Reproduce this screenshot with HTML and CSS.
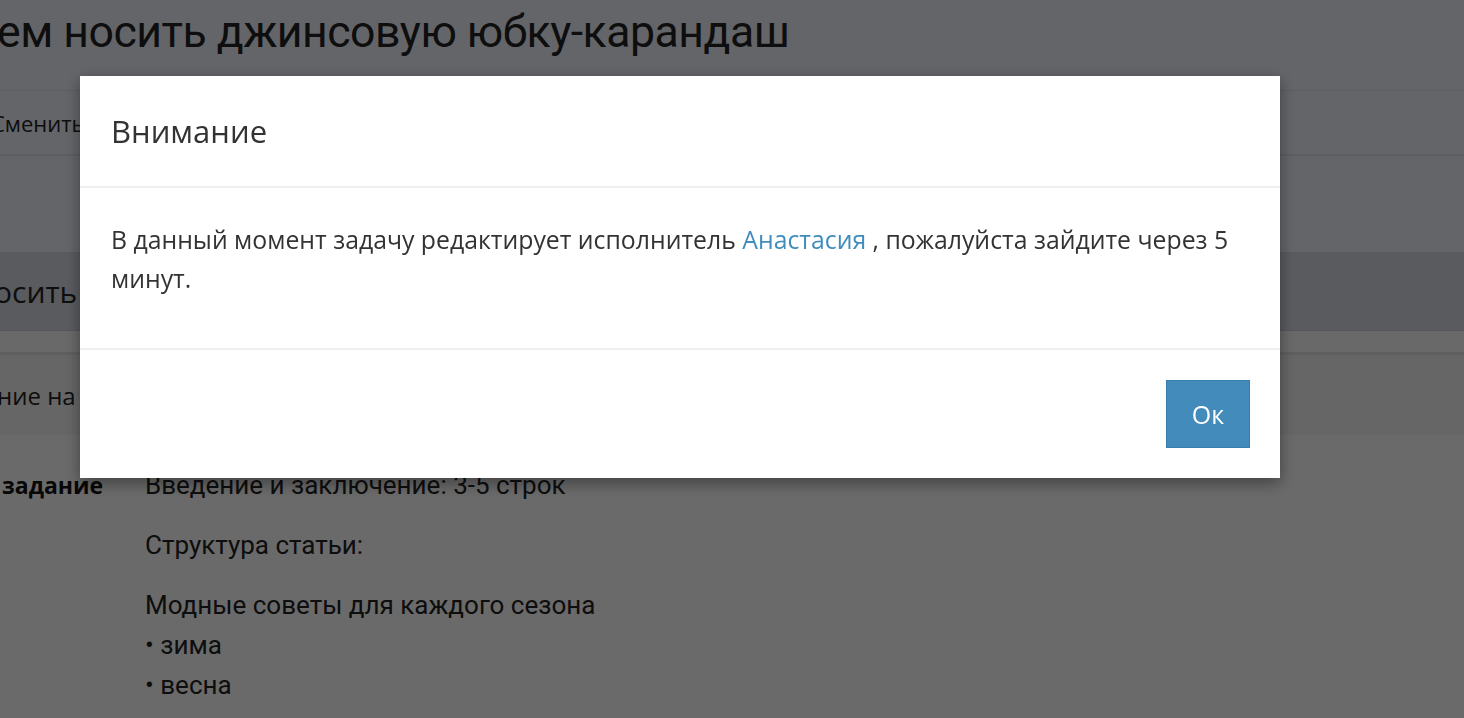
FILE: index.html
```html
<!DOCTYPE html>
<html lang="ru">
  <head>
    <meta charset="UTF-8" />
    <meta name="viewport" content="width=device-width, initial-scale=1.0" />
    <title>Задача</title>
    <link rel="stylesheet" href="styles.css">
  </head>

  <body>
    <div class="page">
      <h1 class="task-title">ем носить джинсовую юбку-карандаш</h1>

      <div class="tabs">
        <div class="tab">Сменить</div>
      </div>

      <div class="panel-head">осить</div>
      <div class="panel-gap"></div>
      <div class="panel-row">ние на</div>

      <div class="task-info">
        <div class="info-label">задание</div>
        <div class="info-value">
          <p>Введение и заключение: 3-5 строк</p>
          <p>Структура статьи:</p>
          <p class="list-head">Модные советы для каждого сезона</p>
          <p class="list-item">• зима</p>
          <p class="list-item">• весна</p>
        </div>
      </div>
    </div>

    <div class="overlay">
      <div class="modal">
        <div class="modal-header">
          <h4 class="modal-title">Внимание</h4>
        </div>
        <div class="modal-body">
          В данный момент задачу редактирует исполнитель <a href="#">Анастасия</a> , пожалуйста зайдите через 5 минут.
        </div>
        <div class="modal-footer">
          <button class="btn-ok">Ок</button>
        </div>
      </div>
    </div>
  </body>
</html>
```

FILE: styles.css
```css
body {
  margin: 0;
  background-color: #eef0f7;
  font-family: "Open Sans", "Noto Sans", sans-serif;
  color: #333;
  overflow: hidden;
}

.page {
  margin-left: -3px;
}

.task-title {
  margin: 0;
  height: 90px;
  padding-top: 6px;
  box-sizing: border-box;
  font-family: Roboto, sans-serif;
  font-weight: 400;
  font-size: 44.6px;
  letter-spacing: -0.5px;
  color: #222;
}

.tabs {
  display: flex;
  border-top: 1px solid #e0e2e8;
  border-bottom: 2px solid #e0e2e8;
  height: 63px;
  margin-left: -6px;
}

.tab {
  display: flex;
  align-items: center;
  padding: 0 20px 0 0;
  font-size: 22px;
  color: #222;
}

.panel-head {
  margin-top: 96px;
  height: 78px;
  background-color: #d7dae2;
  border-bottom: 1px solid #cdd0d8;
  display: flex;
  align-items: center;
  font-size: 30px;
  color: #222;
  margin-left: -3px;
}

.panel-gap {
  height: 21px;
  background-color: #fafafa;
  border-bottom: 3px solid #e3e3e3;
}

.panel-row {
  height: 80px;
  display: flex;
  align-items: center;
  font-size: 24px;
  color: #222;
  background-color: #f3f3f3;
}

.task-info {
  display: flex;
  background-color: #fdfdfd;
  padding-top: 36px;
  min-height: 400px;
}

.info-label {
  width: 148px;
  padding-left: 5px;
  box-sizing: border-box;
  font-weight: 700;
  font-size: 23px;
  color: #111;
  line-height: 28px;
}

.info-value {
  font-family: Roboto, sans-serif;
  font-size: 26px;
  color: #222;
}

.info-value p {
  margin: 0 0 32px;
  line-height: 28px;
}

.info-value .list-head,
.info-value .list-item {
  margin-bottom: 12px;
}

.overlay {
  position: fixed;
  top: 0;
  left: 0;
  right: 0;
  bottom: 0;
  background-color: rgba(0, 0, 0, 0.58);
  padding: 76px 0 0 80px;
}

.modal {
  width: 1200px;
  background-color: #fff;
  box-shadow: 0 5px 15px rgba(0, 0, 0, 0.4);
}

.modal-header {
  height: 110px;
  display: flex;
  align-items: center;
  padding: 0 31px;
  border-bottom: 2px solid #f0f0f0;
}

.modal-title {
  margin: 0;
  font-weight: 400;
  font-size: 31px;
  color: #333;
}

.modal-body {
  padding: 32px 31px 50px;
  font-size: 24.8px;
  line-height: 39px;
  color: #333;
  border-bottom: 2px solid #f0f0f0;
}

.modal-body a {
  color: #3f8cbd;
  text-decoration: none;
}

.modal-footer {
  display: flex;
  justify-content: flex-end;
  padding: 30px 30px;
}

.btn-ok {
  width: 84px;
  height: 68px;
  background-color: #428bba;
  border: 1px solid #3a7caa;
  border-radius: 0;
  color: #fff;
  font-family: "Open Sans", sans-serif;
  font-size: 25px;
}
```
